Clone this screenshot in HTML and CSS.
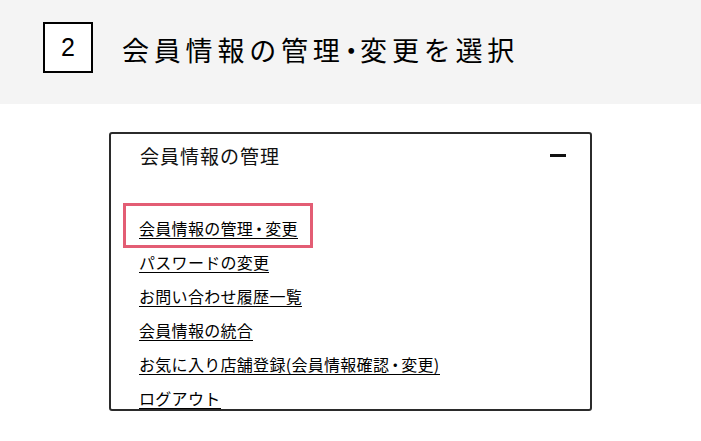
FILE: index.html
```html
<!DOCTYPE html>
<html lang="ja">
<head>
<meta charset="utf-8">
<title>会員情報の管理・変更を選択</title>
<link rel="stylesheet" href="styles.css">
</head>
<body>
<header class="step">
  <div class="step-num">2</div>
  <h1 class="step-title">会員情報の管理<span class="dot">・</span>変更を選択</h1>
</header>
<section class="panel">
  <div class="panel-head">
    <span class="panel-title">会員情報の管理</span>
    <span class="minus"></span>
  </div>
  <ul class="links">
    <li><a href="#">会員情報の管理<span class="dot">・</span>変更</a></li>
    <li><a href="#">パスワードの変更</a></li>
    <li><a href="#">お問い合わせ履歴一覧</a></li>
    <li><a href="#">会員情報の統合</a></li>
    <li><a href="#">お気に入り店舗登録(会員情報確認<span class="dot">・</span>変更)</a></li>
    <li><a href="#">ログアウト</a></li>
  </ul>
  <div class="highlight"></div>
</section>
</body>
</html>
```

FILE: styles.css
```css
html, body {
  margin: 0;
  padding: 0;
  background: #fff;
  font-family: "Noto Sans CJK JP", "Noto Sans", sans-serif;
  color: #111;
}

.step {
  height: 104px;
  background: #f4f4f4;
  display: flex;
  align-items: flex-start;
  padding: 22px 0 0 43px;
  box-sizing: border-box;
}

.step-num {
  width: 50px;
  height: 51px;
  box-sizing: border-box;
  border: 2px solid #000;
  background: #fff;
  display: flex;
  align-items: center;
  justify-content: center;
  font-family: "Liberation Sans", Arial, sans-serif;
  font-size: 25px;
  color: #000;
}

.step-title {
  margin: 14px 0 0 29px;
  font-size: 27px;
  line-height: 28px;
  font-weight: 400;
  letter-spacing: 4.8px;
  color: #000;
}

.dot {
  font-feature-settings: "palt";
}

.step-title .dot {
  letter-spacing: 2px;
}

.links .dot {
  letter-spacing: 0;
  padding: 0 2px;
}

.panel {
  position: relative;
  width: 483px;
  height: 279px;
  margin: 28px auto 0;
  box-sizing: border-box;
  border: 2px solid #2b2b2b;
  border-radius: 3px;
  overflow: hidden;
}

.panel-head {
  height: 42px;
  display: flex;
  align-items: center;
  justify-content: space-between;
  padding: 0 24px 0 29px;
}

.panel-title {
  font-size: 19px;
  letter-spacing: 1px;
  color: #111;
}

.minus {
  width: 16px;
  height: 3px;
  background: #111;
}

.links {
  list-style: none;
  margin: 0;
  padding: 35px 0 0 28px;
}

.links li {
  height: 34px;
  line-height: 34px;
  font-size: 16px;
  letter-spacing: 0.3px;
}

.links a {
  display: inline-block;
  line-height: 19px;
  color: #000;
  text-decoration: none;
  border-bottom: 1px solid #000;
  white-space: nowrap;
}

.highlight {
  position: absolute;
  left: 12px;
  top: 69px;
  width: 190px;
  height: 45px;
  box-sizing: border-box;
  border: 3px solid #e35d74;
}
```
